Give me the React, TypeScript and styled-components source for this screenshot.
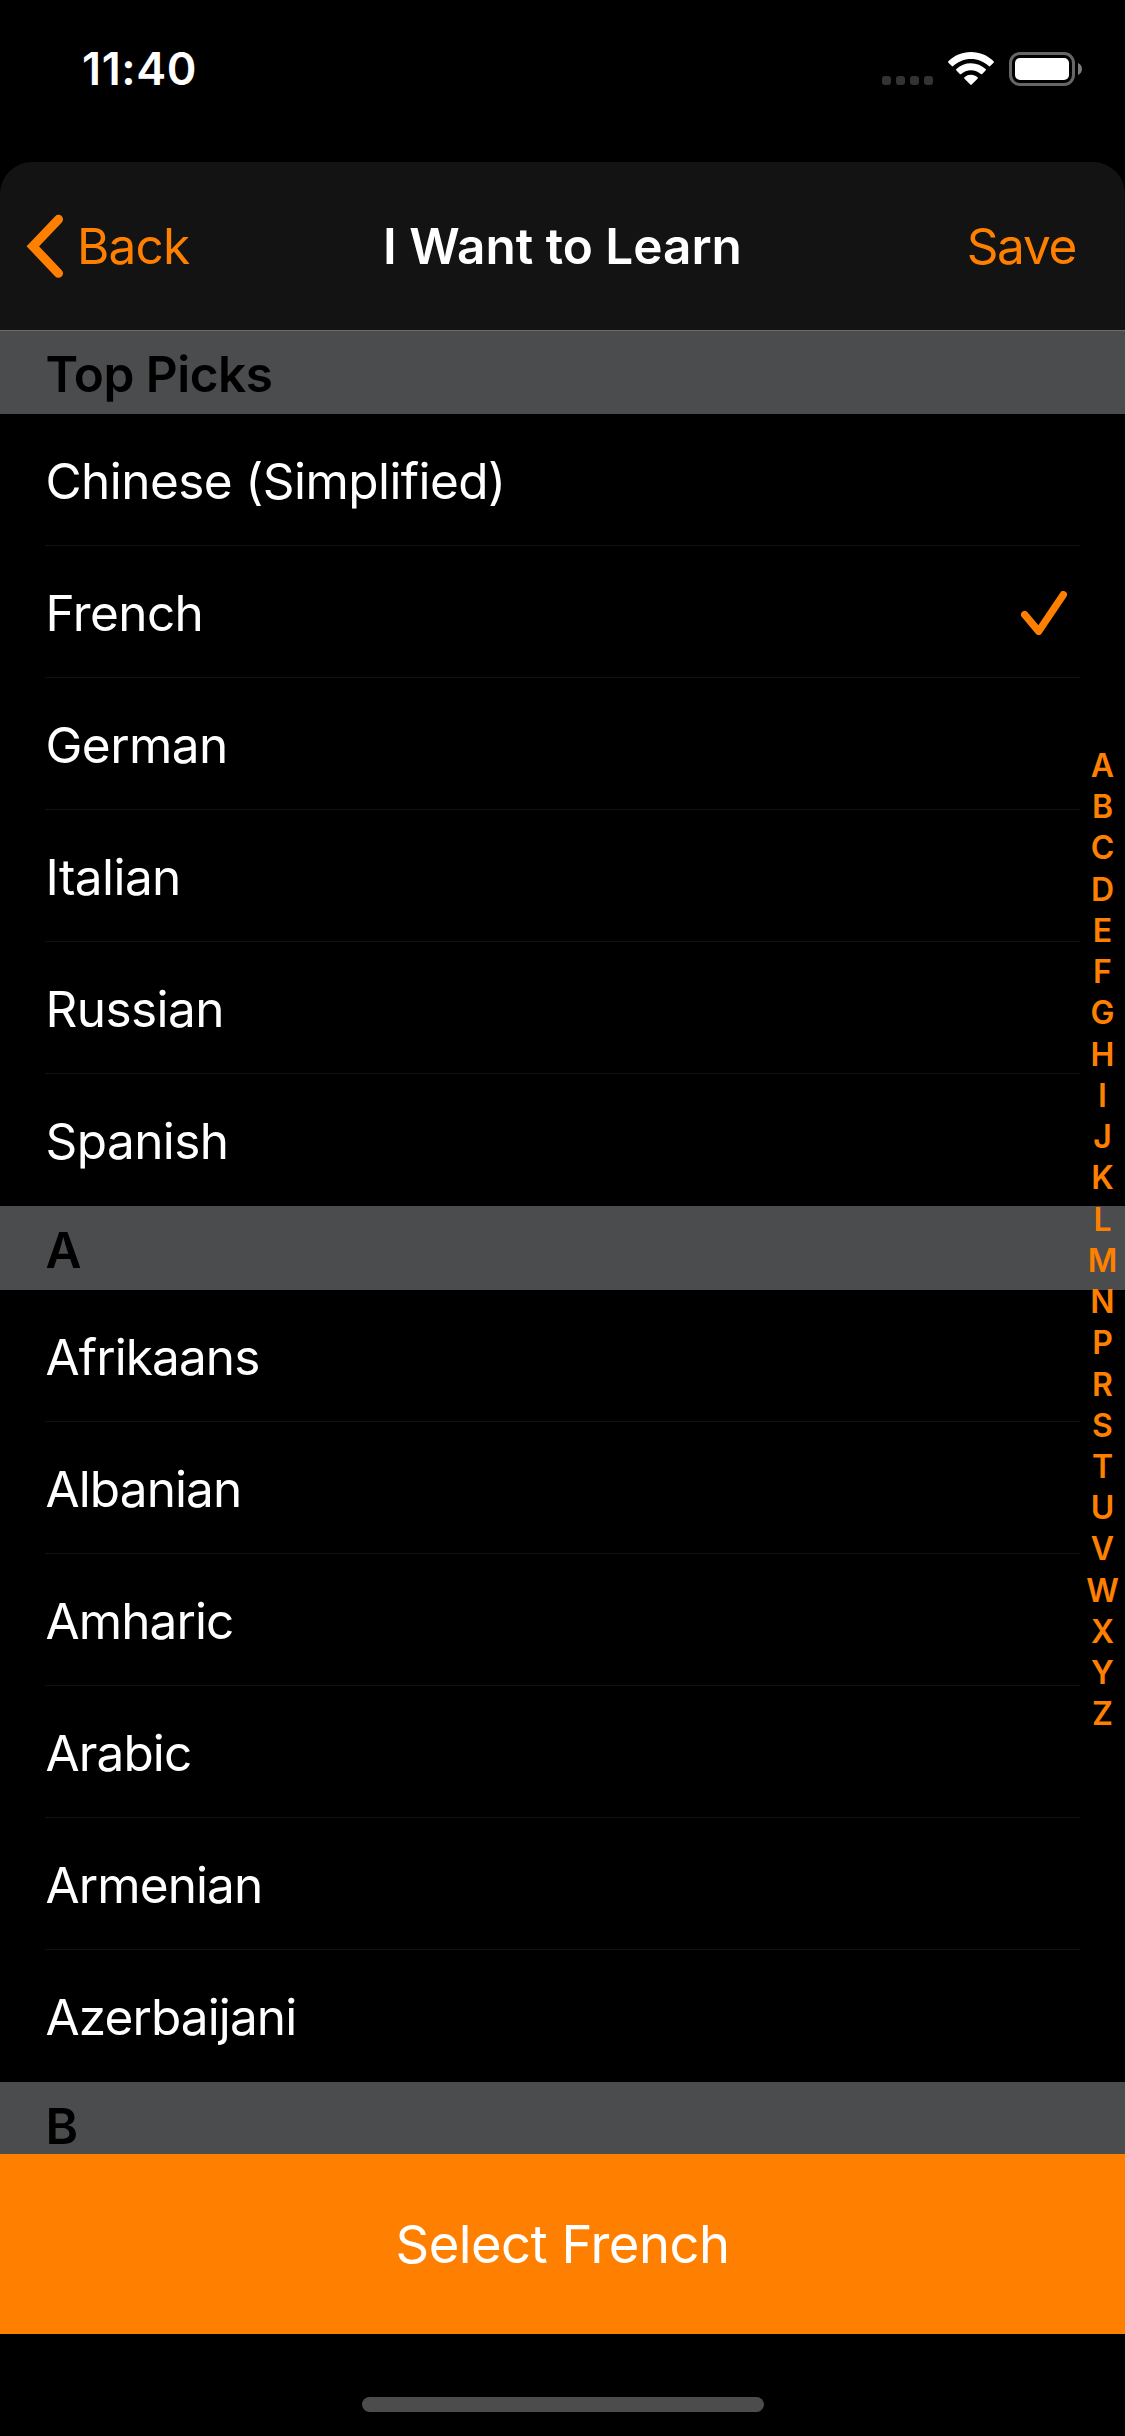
import React from "react";
import styled, { createGlobalStyle } from "styled-components";

const GlobalStyle = createGlobalStyle`
  * { box-sizing: border-box; }
  body { margin: 0; background: #000; font-family: Inter, "Liberation Sans", sans-serif; }
  button { border: 0; padding: 0; background: none; font: inherit; color: inherit; }
`;

const Screen = styled.div`
  width: 1125px;
  height: 2436px;
  display: flex;
  flex-direction: column;
  background: #000;
  color: #fff;
  overflow: hidden;
`;

const StatusBar = styled.header`
  height: 162px;
  flex: none;
  display: flex;
  justify-content: space-between;
  align-items: flex-start;
  padding: 52px 43px 0 82px;
`;

const Clock = styled.time`
  font-size: 45px;
  line-height: 34px;
  font-weight: 600;
  letter-spacing: 0.6px;
`;

const StatusIcons = styled.div`
  display: flex;
  align-items: flex-end;
  height: 34px;
`;

const Signal = styled.div`
  display: flex;
  gap: 5px;
  margin: 0 15px 1px 0;
`;

const SignalDot = styled.i`
  width: 9px;
  height: 9px;
  border-radius: 3px;
  background: #333;
`;

const Sheet = styled.main`
  flex: 1;
  min-height: 0;
  display: flex;
  flex-direction: column;
  position: relative;
`;

const NavBar = styled.nav`
  height: 168px;
  flex: none;
  display: grid;
  grid-template-columns: 1fr auto 1fr;
  align-items: center;
  padding: 0 49px 0 25px;
  background: #131313;
  border-radius: 32px 32px 0 0;
  font-size: 49.5px;
  line-height: 60px;
`;

const NavButton = styled.button<{ $end?: boolean }>`
  display: flex;
  align-items: center;
  gap: 14px;
  justify-self: ${(p) => (p.$end ? "end" : "start")};
  color: #ff8000;
  letter-spacing: ${(p) => (p.$end ? -1.3 : -0.8)}px;
`;

const Title = styled.h1`
  margin: 0 0 0 24px;
  font-size: inherit;
  font-weight: 600;
  letter-spacing: 0;
`;

const List = styled.div`
  flex: none;
  height: 1824px;
  overflow: hidden;
`;

const SectionHeader = styled.h2<{ $first?: boolean }>`
  height: 84px;
  margin: 0;
  padding: ${(p) => (p.$first ? 15 : 16)}px 45.5px 0;
  border-top: ${(p) => (p.$first ? "1px solid #6a6b6c" : "0")};
  background: #4b4c4d;
  color: #000;
  font-size: 49.5px;
  line-height: 56px;
  font-weight: 600;
  letter-spacing: -0.5px;
`;

const Row = styled.div<{ $last?: boolean; $tracking: number }>`
  height: 132px;
  margin: 0 45px;
  padding: 2px 13px 0 0.5px;
  display: flex;
  align-items: center;
  justify-content: space-between;
  border-bottom: 1px solid ${(p) => (p.$last ? "transparent" : "#111")};
  font-size: 49.5px;
  letter-spacing: ${(p) => p.$tracking}px;
`;

const AlphaIndex = styled.aside`
  position: absolute;
  top: 583px;
  right: 0;
  width: 45px;
  display: flex;
  flex-direction: column;
  align-items: center;
  color: #ff8000;
  font-size: 32px;
  line-height: 41.24px;
  font-weight: 600;
`;

const SelectButton = styled.button`
  height: 180px;
  flex: none;
  background: #ff8000;
  color: #fff;
  font-size: 52.5px;
  letter-spacing: -0.5px;
  text-align: center;
`;

const HomeArea = styled.footer`
  flex: 1;
  display: flex;
  justify-content: center;
  align-items: flex-end;
  padding-bottom: 24px;
`;

const HomeIndicator = styled.div`
  width: 402px;
  height: 15px;
  border-radius: 8px;
  background: #4c4c4c;
`;

const SECTIONS = [
  {
    name: "Top Picks",
    tracking: -0.57,
    items: ["Chinese (Simplified)", "French", "German", "Italian", "Russian", "Spanish"],
  },
  {
    name: "A",
    tracking: -0.9,
    items: ["Afrikaans", "Albanian", "Amharic", "Arabic", "Armenian", "Azerbaijani"],
  },
  { name: "B", tracking: -0.6, items: [] as string[] },
];

const LETTERS = "ABCDEFGHIJKLMNPRSTUVWXYZ".split("");

const Wifi = styled.svg`
  margin-right: 15px;
`;

const WifiIcon = () => (
  <Wifi width="46" height="34" viewBox="0 0 46 34" fill="#fff">
    <path d="M23 0C31.9 0 40 3.6 45.6 9.3a1 1 0 0 1 0 1.4l-3.4 3.4a1 1 0 0 1-1.4 0C36.2 9.7 29.9 7 23 7S9.8 9.7 5.2 14.1a1 1 0 0 1-1.4 0L.4 10.7a1 1 0 0 1 0-1.4C6 3.6 14.1 0 23 0Z" />
    <path d="M23 11.3c5.6 0 10.8 2.2 14.6 5.8a1 1 0 0 1 0 1.5l-3.4 3.4a1 1 0 0 1-1.4 0A14.2 14.2 0 0 0 23 18.2c-3.8 0-7.2 1.4-9.8 3.8a1 1 0 0 1-1.4 0l-3.4-3.4a1 1 0 0 1 0-1.5A21.2 21.2 0 0 1 23 11.3Z" />
    <path d="M23 22.8c2.5 0 4.8.9 6.5 2.4a1 1 0 0 1 0 1.5l-5.8 5.9a1 1 0 0 1-1.4 0l-5.8-5.9a1 1 0 0 1 0-1.5A9.8 9.8 0 0 1 23 22.8Z" />
  </Wifi>
);

const BatteryIcon = () => (
  <svg width="73" height="34" viewBox="0 0 73 34">
    <rect x="1.5" y="1.5" width="63" height="31" rx="9.5" fill="none" stroke="#666" strokeWidth="3" />
    <rect x="6" y="6" width="54" height="22" rx="5" fill="#fff" />
    <path d="M69 11v12c2.4-1 4-3.3 4-6s-1.6-5-4-6Z" fill="#7c7c7c" />
  </svg>
);

const BackIcon = () => (
  <svg width="38" height="64" viewBox="0 0 38 64" fill="none" stroke="#ff8000" strokeWidth="9" strokeLinecap="round">
    <path d="M33.5 5.3 7.8 32.3 33.5 59.3" />
  </svg>
);

const CheckIcon = () => (
  <svg width="46" height="44" viewBox="0 0 46 44" fill="none" stroke="#ff8000" strokeWidth="7.4" strokeLinecap="round" strokeLinejoin="round">
    <path d="M3.7 23.7 17.7 40.3 42.3 3.7" />
  </svg>
);

export default function App() {
  const selected = "French";
  return (
    <Screen>
      <GlobalStyle />
      <StatusBar>
        <Clock>11:40</Clock>
        <StatusIcons>
          <Signal>
            {[0, 1, 2, 3].map((n) => (
              <SignalDot key={n} />
            ))}
          </Signal>
          <WifiIcon />
          <BatteryIcon />
        </StatusIcons>
      </StatusBar>
      <Sheet>
        <NavBar>
          <NavButton>
            <BackIcon />
            Back
          </NavButton>
          <Title>I Want to Learn</Title>
          <NavButton $end>Save</NavButton>
        </NavBar>
        <List>
          {SECTIONS.map((section, s) => (
            <React.Fragment key={section.name}>
              <SectionHeader $first={s === 0}>{section.name}</SectionHeader>
              {section.items.map((item, i) => (
                <Row key={item} $tracking={section.tracking} $last={i === section.items.length - 1}>
                  {item}
                  {item === selected && <CheckIcon />}
                </Row>
              ))}
            </React.Fragment>
          ))}
        </List>
        <AlphaIndex>
          {LETTERS.map((letter) => (
            <span key={letter}>{letter}</span>
          ))}
        </AlphaIndex>
        <SelectButton>Select {selected}</SelectButton>
        <HomeArea>
          <HomeIndicator />
        </HomeArea>
      </Sheet>
    </Screen>
  );
}
